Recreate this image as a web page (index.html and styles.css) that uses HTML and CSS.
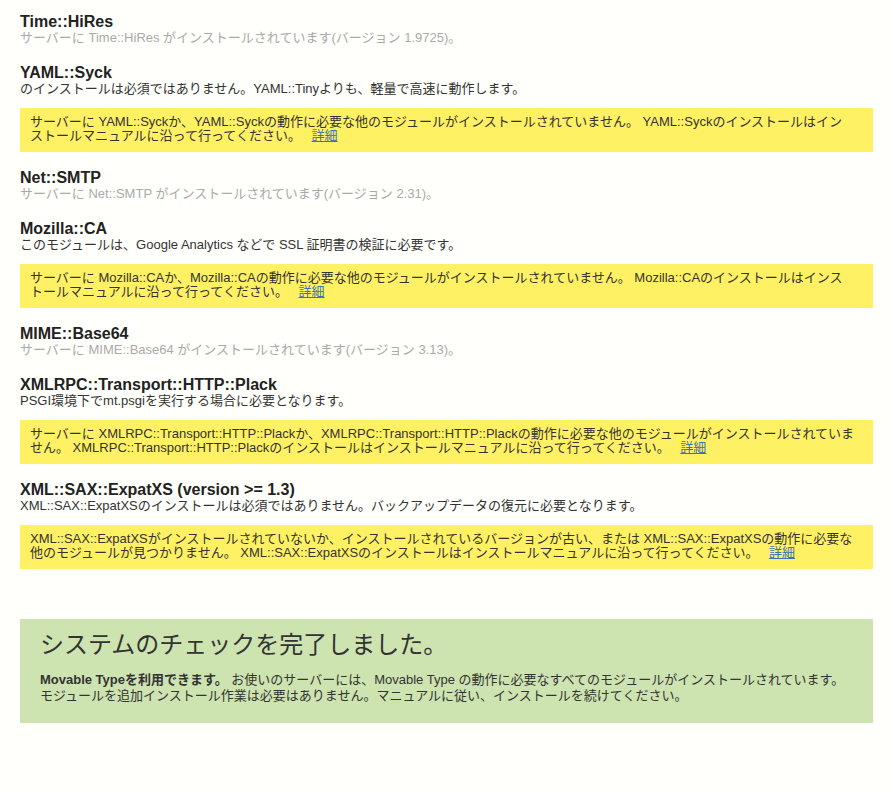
FILE: index.html
```html
<!DOCTYPE html>
<html lang="ja">
<head>
<meta charset="utf-8">
<title>システムのチェック</title>
<link rel="stylesheet" href="styles.css">
</head>
<body>
<div class="page">
  <div class="module">
    <h3 class="module-name">Time::HiRes</h3>
    <p class="module-desc installed">サーバーに Time::HiRes がインストールされています(バージョン 1.9725)。</p>
  </div>
  <div class="module">
    <h3 class="module-name">YAML::Syck</h3>
    <p class="module-desc">のインストールは必須ではありません。YAML::Tinyよりも、軽量で高速に動作します。</p>
    <div class="note">サーバーに YAML::Syckか、YAML::Syckの動作に必要な他のモジュールがインストールされていません。 YAML::Syckのインストールはイン<br>ストールマニュアルに沿って行ってください。 <a class="more" href="#">詳細</a></div>
  </div>
  <div class="module">
    <h3 class="module-name">Net::SMTP</h3>
    <p class="module-desc installed">サーバーに Net::SMTP がインストールされています(バージョン 2.31)。</p>
  </div>
  <div class="module">
    <h3 class="module-name">Mozilla::CA</h3>
    <p class="module-desc">このモジュールは、Google Analytics などで SSL 証明書の検証に必要です。</p>
    <div class="note">サーバーに Mozilla::CAか、Mozilla::CAの動作に必要な他のモジュールがインストールされていません。 Mozilla::CAのインストールはインス<br>トールマニュアルに沿って行ってください。 <a class="more" href="#">詳細</a></div>
  </div>
  <div class="module">
    <h3 class="module-name">MIME::Base64</h3>
    <p class="module-desc installed">サーバーに MIME::Base64 がインストールされています(バージョン 3.13)。</p>
  </div>
  <div class="module">
    <h3 class="module-name">XMLRPC::Transport::HTTP::Plack</h3>
    <p class="module-desc">PSGI環境下でmt.psgiを実行する場合に必要となります。</p>
    <div class="note">サーバーに XMLRPC::Transport::HTTP::Plackか、XMLRPC::Transport::HTTP::Plackの動作に必要な他のモジュールがインストールされていま<br>せん。 XMLRPC::Transport::HTTP::Plackのインストールはインストールマニュアルに沿って行ってください。 <a class="more" href="#">詳細</a></div>
  </div>
  <div class="module">
    <h3 class="module-name">XML::SAX::ExpatXS (version &gt;= 1.3)</h3>
    <p class="module-desc">XML::SAX::ExpatXSのインストールは必須ではありません。バックアップデータの復元に必要となります。</p>
    <div class="note">XML::SAX::ExpatXSがインストールされていないか、インストールされているバージョンが古い、または XML::SAX::ExpatXSの動作に必要な<br>他のモジュールが見つかりません。 XML::SAX::ExpatXSのインストールはインストールマニュアルに沿って行ってください。 <a class="more" href="#">詳細</a></div>
  </div>

  <div class="complete">
    <h2 class="complete-title">システムのチェックを完了しました。</h2>
    <p class="complete-text"><strong>Movable Typeを利用できます。</strong> お使いのサーバーには、Movable Type の動作に必要なすべてのモジュールがインストールされています。<br>モジュールを追加インストール作業は必要はありません。マニュアルに従い、インストールを続けてください。</p>
  </div>
</div>
</body>
</html>
```

FILE: styles.css
```css
html, body {
  margin: 0;
  padding: 0;
  background: #fffffb;
}

body {
  font-family: "Liberation Sans", "Noto Sans CJK JP", sans-serif;
  font-size: 13px;
  color: #333333;
}

.page {
  padding: 13px 20px 40px 20px;
}

.module {
  margin-bottom: 17px;
}

.module-name {
  margin: 0;
  font-size: 16px;
  line-height: 18px;
  font-weight: bold;
  color: #222222;
}

.module-desc {
  margin: 0;
  padding-bottom: 2px;
  font-size: 13px;
  line-height: 14px;
  color: #333333;
}

.module-desc.installed {
  color: #aaaaaa;
}

.note {
  margin-top: 10px;
  padding: 7px 10px 9px 10px;
  background: #fff163;
  font-size: 13px;
  line-height: 14px;
  color: #333333;
}

.more {
  margin-left: 7px;
  color: #3d72b8;
  text-decoration: underline;
}

.complete {
  margin-top: 50px;
  padding: 11px 20px 19px 20px;
  background: #cde3b0;
}

.complete-title {
  margin: 0 0 12px 0;
  font-size: 24px;
  line-height: 30px;
  font-weight: normal;
  color: #333333;
}

.complete-text {
  margin: 0;
  font-size: 13px;
  line-height: 16px;
  color: #333333;
}

.complete-text strong {
  font-weight: bold;
}
```
